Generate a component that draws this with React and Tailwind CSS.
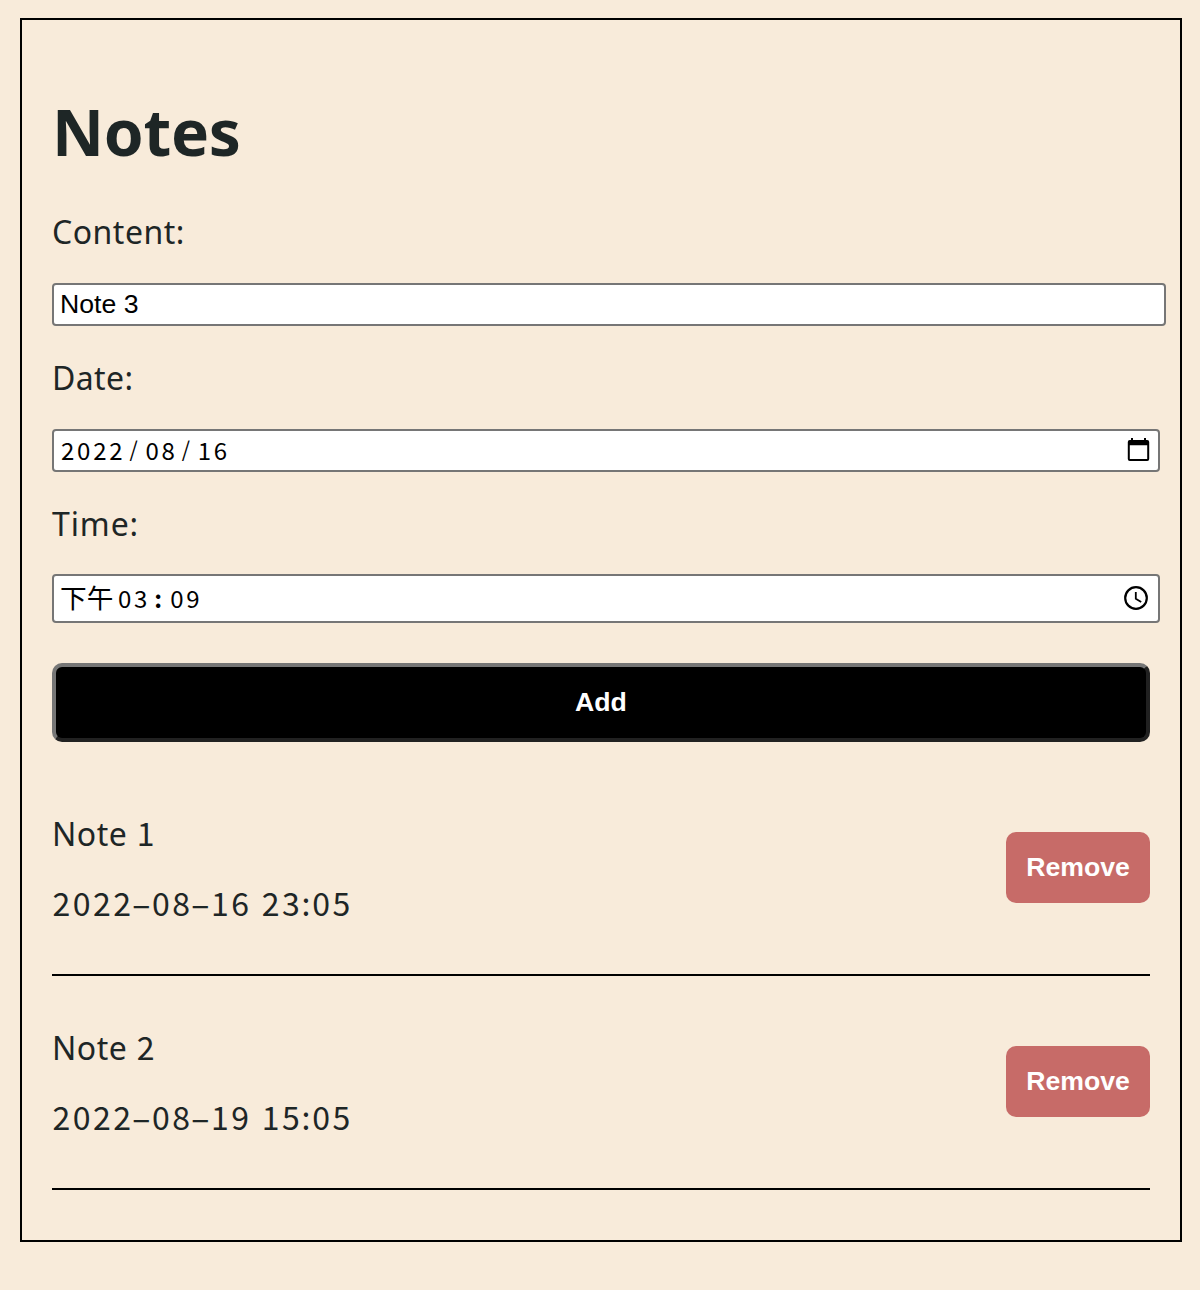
const notes = [
  { title: "Note", number: "1", date: "2022-08-16", time: "23:05" },
  { title: "Note", number: "2", date: "2022-08-19", time: "15:05" },
];

const FIELD = "flex items-center rounded-[4px] border-2 border-[#767676] bg-white pl-[6px] text-black";
const LABEL = "h-10 text-[32px] leading-[41px] whitespace-nowrap";
const DIGITS = "font-['Noto_Sans_CJK_SC',sans-serif] leading-none";
const SANS = "font-['Liberation_Sans',Arial,sans-serif] text-[26.67px]";

const CELL_WIDTHS = { "-": "w-[18.5px] scale-x-[1.85]", " ": "w-[10.1px]", ":": "w-[10.1px]" };

function CalendarIcon() {
  return (
    <svg className="mr-[8px] mb-[2px] h-6 w-[23px]" viewBox="0 0 22 24">
      <path d="M3.5 0h2v2h11V0h2v2h1.2a2 2 0 0 1 2 2v17a2 2 0 0 1-2 2H2.3a2 2 0 0 1-2-2V4a2 2 0 0 1 2-2h1.2zM2.3 7.2V21h17.4V7.2z" fillRule="evenodd" />
    </svg>
  );
}

function ClockIcon() {
  return (
    <svg className="mr-[10px] mb-[2px] size-6" viewBox="0 0 24 24" fill="none" stroke="black">
      <circle cx="12" cy="12" r="10.8" strokeWidth="2.2" />
      <path d="M11.8 6v6.7l5.4 3.2" strokeWidth="1.8" />
    </svg>
  );
}

/* Evenly spaced figures, with narrower cells for the separators. */
function Figures({ text }) {
  return (
    <span className={`${DIGITS} -ml-[0.7px]`}>
      {[...text].map((char, i) => (
        <span
          key={i}
          className={`inline-block text-center whitespace-pre ${CELL_WIDTHS[char] ?? "w-[20.25px]"}`}
        >
          {char}
        </span>
      ))}
    </span>
  );
}

function Note({ note }) {
  return (
    <li className="flex h-[214px] items-center justify-between border-b-2 border-black">
      <div className="flex flex-col gap-[30px]">
        <p className={LABEL}>
          <span className="tracking-[0.5px]">{note.title} </span>
          <Figures text={note.number} />
        </p>
        <p className={LABEL}>
          <Figures text={`${note.date} ${note.time}`} />
        </p>
      </div>
      <button className={`${SANS} mb-[2px] h-[71px] w-36 rounded-[10px] bg-[#c76b68] pb-px font-bold text-white`}>
        Remove
      </button>
    </li>
  );
}

export default function App() {
  return (
    <div className="h-[1290px] bg-[#f8ebda] pt-[18px] pl-5 font-['Noto_Sans',sans-serif] text-[#1e2626]">
      <main className="h-[1224px] w-[1162px] border-2 border-black px-[30px] pt-[75px]">
        <h1 className="h-[72px] text-[64px] leading-[73px] font-bold tracking-[-0.3px]">Notes</h1>
        <form className="mt-[44px] flex flex-col items-start">
          <label className={`${LABEL} tracking-[0.5px]`}>Content:</label>
          <div className={`${FIELD} ${SANS} mt-8 h-[43px] w-[1114px] pb-[2px]`}>Note 3</div>
          <label className={`${LABEL} mt-[31px] tracking-[0.4px]`}>Date:</label>
          <div className={`${FIELD} ${DIGITS} mt-8 h-[43px] w-[1108px] justify-between text-[24px]`}>
            <span className="flex items-center pb-[2px] pl-[1px] tracking-[2.8px]">
              <span>2022</span>
              <span className="w-[20px] pb-[3px] pl-[4px] text-[21px] leading-none">/</span>
              <span>08</span>
              <span className="w-[20px] pb-[3px] pl-[4px] text-[21px] leading-none">/</span>
              <span>16</span>
            </span>
            <CalendarIcon />
          </div>
          <label className={`${LABEL} mt-[31px] tracking-[0.9px]`}>Time:</label>
          <div className={`${FIELD} mt-[31px] h-[49px] w-[1108px] justify-between`}>
            <span className="flex items-center">
              <span className="mb-[3px] w-[58px] font-['Noto_Sans_CJK_SC',sans-serif] text-[26.67px] leading-[40px]">下午</span>
              <span className={`${DIGITS} flex pb-[2px] text-[24px] tracking-[2.8px]`}>
                <span>03</span>
                <span className="w-[20px] pl-[4px] font-bold">:</span>
                <span>09</span>
              </span>
            </span>
            <ClockIcon />
          </div>
          <button className={`${SANS} mt-10 h-[79px] w-[1098px] rounded-[10px] border-4 border-t-[#767676] border-r-[#212121] border-b-[#212121] border-l-[#767676] bg-black pb-[2px] font-bold text-white`}>
            Add
          </button>
        </form>
        <ul className="mt-5">
          {notes.map((note) => (
            <Note key={note.number} note={note} />
          ))}
        </ul>
      </main>
    </div>
  );
}
